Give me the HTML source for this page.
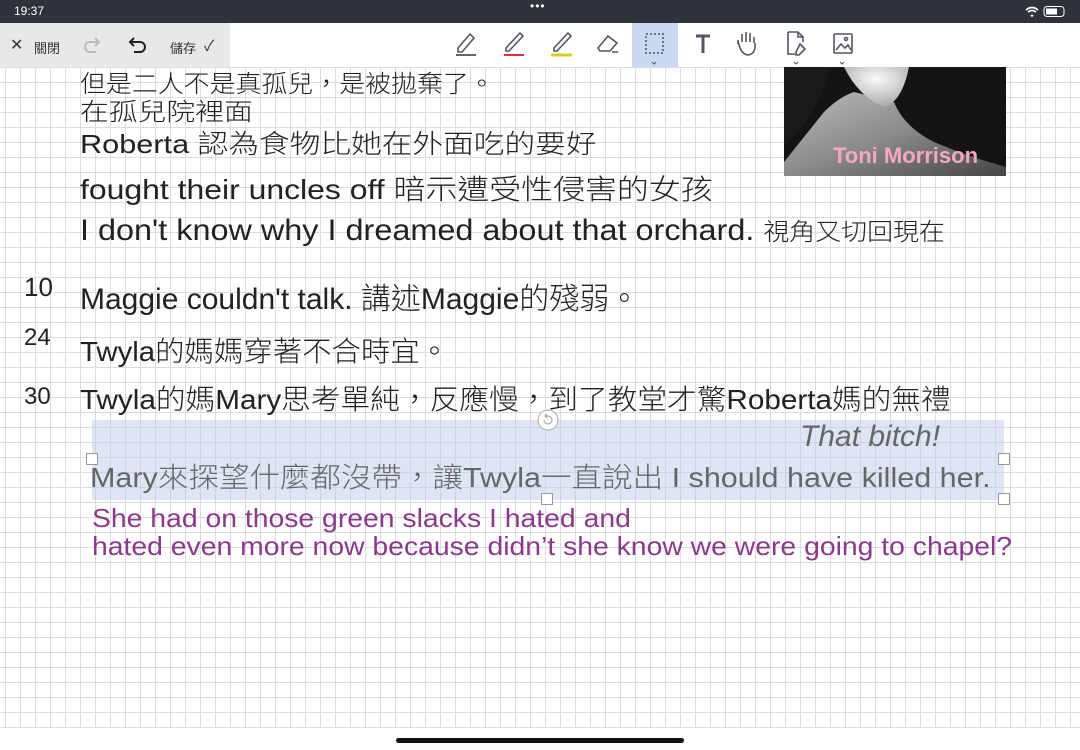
<!DOCTYPE html>
<html><head><meta charset="utf-8"><style>
*{margin:0;padding:0;box-sizing:border-box}
body{width:1080px;height:750px;overflow:hidden;position:relative;background:#fff;font-family:"Liberation Sans","Noto Sans CJK TC",sans-serif}
.grid{position:absolute;left:0;top:66px;width:1080px;height:662px;
background-image:linear-gradient(to right,#dcdcdc 1px,transparent 1px),linear-gradient(to bottom,#dcdcdc 1px,transparent 1px);
background-size:15px 15px;background-position:5px 1px}
.status{position:absolute;left:0;top:0;width:1080px;height:23px;background:#2d323b;color:#fff;font-size:12px}
.tb{position:absolute;left:0;top:23px;width:1080px;height:44px;background:#fff}
.left{position:absolute;left:0;top:23px;width:230px;height:44px;background:#e8e8e8;font-size:13px;color:#333}
.hw{position:absolute;font-family:"Liberation Sans","Noto Sans CJK TC",sans-serif;color:#222;font-weight:300;white-space:nowrap;transform-origin:0 0}
.sel{position:absolute;left:92px;top:420px;width:912px;height:80px;background:rgba(190,205,235,.5)}
.h{position:absolute;width:12px;height:12px;border:1px solid #999;background:#fff}
.purple{position:absolute;left:92px;color:#8b3a8b;font-size:26px;white-space:nowrap;transform-origin:0 0;transform:scaleX(1.09)}
svg{position:absolute}
</style></head><body>
<div class="grid"></div>
<div class="status"><span style="position:absolute;left:14px;top:4px">19:37</span>
<span style="position:absolute;left:530px;top:-1px;letter-spacing:1px">•••</span>
<svg style="left:1024px;top:5px" width="46" height="13"><path d="M2 5 Q8 0 14 5 M4 7 Q8 4 12 7 M7 10 L8 11 L9 10" stroke="#fff" fill="none" stroke-width="1.6"/><rect x="20" y="1.5" width="20" height="10" rx="3" stroke="#fff" fill="none"/><rect x="22" y="3.5" width="11" height="6" fill="#fff"/></svg></div>
<div class="tb"></div>
<div style="position:absolute;left:632px;top:23px;width:46px;height:44px;background:#c9d9f1"></div>
<div class="left">
<span style="position:absolute;left:10px;top:12px;font-size:16px">✕</span>
<span style="position:absolute;left:34px;top:15px">關閉</span>
<svg style="left:82px;top:11px" width="22" height="22"><path d="M17 8 H8 a5 5 0 0 0 0 10 h6 M13 4 L17 8 L13 12" stroke="#bbb" stroke-width="2" fill="none"/></svg>
<svg style="left:126px;top:11px" width="22" height="22"><path d="M4 8 H14 a5 5 0 0 1 0 10 h-6 M8 4 L4 8 L8 12" stroke="#222" stroke-width="2" fill="none"/></svg>
<span style="position:absolute;left:170px;top:15px">儲存</span>
<span style="position:absolute;left:204px;top:12px;font-size:15px">✓</span>
</div>
<svg style="left:450px;top:28px" width="420" height="38" fill="none" stroke="#556" stroke-width="1.6">
<path d="M8 20 L20 6 L24 10 L12 24 H8 Z"/><line x1="6" y1="27" x2="26" y2="27" stroke="#333"/>
<path d="M56 20 L70 5 L73 8 L59 23 H56 Z"/><line x1="54" y1="27" x2="74" y2="27" stroke="#e03030" stroke-width="2"/>
<path d="M104 20 L118 5 L121 8 L107 23 H104 Z"/><line x1="101" y1="27" x2="122" y2="27" stroke="#d8d020" stroke-width="3"/>
<path d="M148 20 L158 8 L167 15 L160 23 H150 Z M162 24 H168"/>
<rect x="196" y="6" width="17" height="19" stroke-dasharray="2 2"/><path d="M202 34 l2 2 l2 -2" stroke-width="1"/>
<path d="M246 8 H260 M253 8 V25" stroke-width="3"/>
<path d="M292 14 V6 M296 14 V4 M300 14 V5 M304 15 V9 M288 16 V12 Q290 26 298 27 Q306 26 305 15"/>
<path d="M338 4 H348 L353 9 V14 M338 4 V26 H345 M348 4 V9 H353 M350 16 L355 21 L349 27 L346 27 L346 24 Z"/><path d="M344 34 l2 2 l2 -2" stroke-width="1"/>
<rect x="384" y="6" width="18" height="19" rx="1"/><path d="M386 22 L391 16 L395 20 L398 17 L401 22"/><circle cx="396" cy="11" r="1.5"/><path d="M390 34 l2 2 l2 -2" stroke-width="1"/>
</svg>
<svg style="left:784px;top:67px" width="222" height="109">
<defs><linearGradient id="n" x1="0" y1="0" x2="1" y2="1"><stop offset="0" stop-color="#bbb"/><stop offset=".5" stop-color="#8a8a8a"/><stop offset="1" stop-color="#444"/></linearGradient>
<radialGradient id="c" cx=".5" cy=".3" r=".7"><stop offset="0" stop-color="#fafafa"/><stop offset="1" stop-color="#aaa"/></radialGradient></defs>
<rect width="222" height="109" fill="#141414"/>
<path d="M0 109 L0 95 Q20 70 40 45 Q55 30 70 25 L110 35 Q120 60 150 75 Q185 90 222 100 V109 Z" fill="url(#n)"/>
<path d="M60 0 H125 Q118 35 100 40 Q75 30 60 0 Z" fill="url(#c)"/>
<path d="M0 0 H45 Q40 40 0 80 Z" fill="#1a1a1a"/>
<text x="49" y="96" fill="#f4a8c0" font-family="Liberation Sans" font-weight="bold" font-size="22">Toni Morrison</text>
</svg>
<div class="hw" style="left:80px;top:64px;font-size:24px;transform:scaleX(1.08)">但是二人不是真孤兒，是被拋棄了。</div>
<div class="hw" style="left:80px;top:92px;font-size:24px;transform:scaleX(1.2)">在孤兒院裡面</div>
<div class="hw" style="left:80px;top:124px;font-size:26px;transform:scaleX(1.18)">Roberta 認為食物比她在外面吃的要好</div>
<div class="hw" style="left:80px;top:168px;font-size:28px;transform:scaleX(1.14)">fought their uncles off 暗示遭受性侵害的女孩</div>
<div class="hw" style="left:80px;top:212px;font-size:30px;transform:scaleX(1.08)">I don't know why I dreamed about that orchard. <span style="font-size:24px">視角又切回現在</span></div>
<div class="hw" style="left:24px;top:272px;font-size:26px">10</div>
<div class="hw" style="left:80px;top:274px;font-size:30px">Maggie couldn't talk. 講述Maggie的殘弱。</div>
<div class="hw" style="left:24px;top:324px;font-size:24px">24</div>
<div class="hw" style="left:80px;top:330px;font-size:28px;transform:scaleX(1.05)">Twyla的媽媽穿著不合時宜。</div>
<div class="hw" style="left:24px;top:383px;font-size:24px">30</div>
<div class="hw" style="left:80px;top:378px;font-size:28px;transform:scaleX(1.06)">Twyla的媽Mary思考單純，反應慢，到了教堂才驚Roberta媽的無禮</div>
<div class="sel"></div>
<div class="hw" style="left:800px;top:420px;font-size:30px;color:#666;font-style:italic">That bitch!</div>
<div class="hw" style="left:90px;top:456px;font-size:28px;color:#666;transform:scaleX(1.09)">Mary來探望什麼都沒帶，讓Twyla一直說出 I should have killed her.</div>
<div class="h" style="left:86px;top:453px"></div><div class="h" style="left:998px;top:453px"></div>
<div class="h" style="left:541px;top:493px"></div><div class="h" style="left:998px;top:493px"></div>
<svg style="left:536px;top:408px" width="24" height="24"><circle cx="12" cy="12" r="10" fill="#fff" stroke="#aaa"/><path d="M8 12 a4 4 0 1 0 4 -4 H10 M11 6 L9 8 L11 10" stroke="#999" fill="none"/></svg>
<div class="purple" style="top:503px">She had on those green slacks I hated and</div>
<div class="purple" style="top:531px">hated even more now because didn’t she know we were going to chapel?</div>
<div style="position:absolute;left:396px;top:738px;width:288px;height:5px;border-radius:3px;background:#111"></div>
</body></html>
